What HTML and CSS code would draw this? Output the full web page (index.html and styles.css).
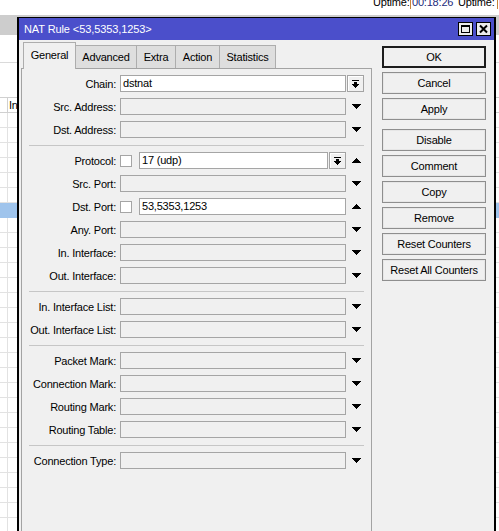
FILE: index.html
```html
<!DOCTYPE html>
<html>
<head>
<meta charset="utf-8">
<link rel="stylesheet" href="styles.css">
</head>
<body>
<svg class="defs" width="0" height="0">
  <symbol id="dn" viewBox="0 0 9 5"><rect x="0" y="0" width="9" height="1"/><rect x="1" y="1" width="7" height="1"/><rect x="2" y="2" width="5" height="1"/><rect x="3" y="3" width="3" height="1"/><rect x="4" y="4" width="1" height="1"/></symbol>
  <symbol id="up" viewBox="0 0 9 5"><rect x="0" y="4" width="9" height="1"/><rect x="1" y="3" width="7" height="1"/><rect x="2" y="2" width="5" height="1"/><rect x="3" y="1" width="3" height="1"/><rect x="4" y="0" width="1" height="1"/></symbol>
  <symbol id="dd" viewBox="0 0 7 8"><rect x="0" y="0" width="7" height="1"/><rect x="2" y="2" width="3" height="2"/><rect x="0" y="4" width="7" height="1"/><rect x="1" y="5" width="5" height="1"/><rect x="2" y="6" width="3" height="1"/><rect x="3" y="7" width="1" height="1"/></symbol>
</svg>

<div class="desk">
  <div class="status">
    <span class="st-lbl">Uptime:</span>
    <span class="st-val">00:18:26</span>
    <span class="st-lbl st-lbl2">Uptime:</span>
    <span class="st-val st-val2"></span>
  </div>
  <div class="toolbar"></div>
  <div class="list">
    <div class="lp1"></div>
    <div class="lp2"></div>
    <div class="lhead"><span class="hc1"></span><span class="hc2">In</span></div>
    <div class="row"></div><div class="row"></div><div class="row"></div><div class="row"></div>
    <div class="row"></div><div class="row"></div><div class="row sel"></div><div class="row"></div>
    <div class="row"></div><div class="row"></div><div class="row"></div><div class="row"></div>
    <div class="row"></div><div class="row"></div><div class="row"></div><div class="row"></div>
    <div class="row"></div><div class="row"></div><div class="row"></div><div class="row"></div>
    <div class="row"></div><div class="row"></div><div class="row"></div><div class="row"></div>
    <div class="row"></div><div class="row"></div><div class="row"></div><div class="row"></div>
  </div>
</div>

<div class="win">
  <div class="titlebar">
    <span class="title">NAT Rule &lt;53,5353,1253&gt;</span>
    <span class="tb-btns">
      <span class="tb-btn"><svg width="11" height="10" viewBox="0 0 11 10"><rect x="1.5" y="1.5" width="8" height="7" fill="none" stroke="#000" stroke-width="1"/><rect x="1" y="1" width="9" height="2" fill="#000"/></svg></span>
      <span class="tb-btn"><svg width="11" height="10" viewBox="0 0 11 10"><path d="M2 1.5 L9 8.5 M9 1.5 L2 8.5" stroke="#000" stroke-width="2"/></svg></span>
    </span>
  </div>
  <div class="wbody">
    <div class="leftcol">
      <div class="tabs">
        <div class="tab active t1">General</div>
        <div class="tab t2">Advanced</div>
        <div class="tab t3">Extra</div>
        <div class="tab t4">Action</div>
        <div class="tab t5">Statistics</div>
      </div>
      <div class="panel">
        <div class="form">
          <div class="frow"><span class="lbl">Chain:</span><span class="fld on">dstnat</span><span class="dbox"><svg class="ddi"><use href="#dd"/></svg></span></div>
          <div class="frow"><span class="lbl">Src. Address:</span><span class="fld"></span><span class="trail"><svg class="arr"><use href="#dn"/></svg></span></div>
          <div class="frow"><span class="lbl">Dst. Address:</span><span class="fld"></span><span class="trail"><svg class="arr"><use href="#dn"/></svg></span></div>
          <div class="sep"></div>
          <div class="frow"><span class="lbl">Protocol:</span><span class="chk"></span><span class="fld on w189">17 (udp)</span><span class="dbox"><svg class="ddi"><use href="#dd"/></svg></span><span class="trail"><svg class="arr"><use href="#up"/></svg></span></div>
          <div class="frow"><span class="lbl">Src. Port:</span><span class="fld"></span><span class="trail"><svg class="arr"><use href="#dn"/></svg></span></div>
          <div class="frow"><span class="lbl">Dst. Port:</span><span class="chk"></span><span class="fld on w207">53,5353,1253</span><span class="trail"><svg class="arr"><use href="#up"/></svg></span></div>
          <div class="frow"><span class="lbl">Any. Port:</span><span class="fld"></span><span class="trail"><svg class="arr"><use href="#dn"/></svg></span></div>
          <div class="frow"><span class="lbl">In. Interface:</span><span class="fld"></span><span class="trail"><svg class="arr"><use href="#dn"/></svg></span></div>
          <div class="frow"><span class="lbl">Out. Interface:</span><span class="fld"></span><span class="trail"><svg class="arr"><use href="#dn"/></svg></span></div>
          <div class="sep"></div>
          <div class="frow"><span class="lbl">In. Interface List:</span><span class="fld"></span><span class="trail"><svg class="arr"><use href="#dn"/></svg></span></div>
          <div class="frow"><span class="lbl">Out. Interface List:</span><span class="fld"></span><span class="trail"><svg class="arr"><use href="#dn"/></svg></span></div>
          <div class="sep"></div>
          <div class="frow"><span class="lbl">Packet Mark:</span><span class="fld"></span><span class="trail"><svg class="arr"><use href="#dn"/></svg></span></div>
          <div class="frow"><span class="lbl">Connection Mark:</span><span class="fld"></span><span class="trail"><svg class="arr"><use href="#dn"/></svg></span></div>
          <div class="frow"><span class="lbl">Routing Mark:</span><span class="fld"></span><span class="trail"><svg class="arr"><use href="#dn"/></svg></span></div>
          <div class="frow"><span class="lbl">Routing Table:</span><span class="fld"></span><span class="trail"><svg class="arr"><use href="#dn"/></svg></span></div>
          <div class="sep"></div>
          <div class="frow"><span class="lbl">Connection Type:</span><span class="fld"></span><span class="trail"><svg class="arr"><use href="#dn"/></svg></span></div>
        </div>
      </div>
    </div>
    <div class="btns">
      <div class="btn def">OK</div>
      <div class="btn">Cancel</div>
      <div class="btn">Apply</div>
      <div class="btn gap">Disable</div>
      <div class="btn">Comment</div>
      <div class="btn">Copy</div>
      <div class="btn">Remove</div>
      <div class="btn">Reset Counters</div>
      <div class="btn">Reset All Counters</div>
    </div>
  </div>
</div>
</body>
</html>
```

FILE: styles.css
```css
* { box-sizing: border-box; }
html, body { margin: 0; padding: 0; }
body {
  width: 499px;
  height: 531px;
  overflow: hidden;
  position: relative;
  background: #fff;
  font-family: "Liberation Sans", Arial, sans-serif;
  font-size: 11px;
  letter-spacing: -0.2px;
  color: #000;
}
.defs { position: absolute; width: 0; height: 0; }

/* background desktop / list */
.desk { width: 499px; height: 531px; }
.status {
  height: 15px;
  display: flex;
  align-items: flex-start;
  padding-left: 373px;
  white-space: nowrap;
}
.st-lbl { display: block; width: 37px; height: 9px; line-height: 5px; flex: none; }
.st-lbl2 { width: 36px; margin-left: 3px; }
.st-val {
  display: block;
  width: 45px;
  height: 9px;
  margin-left: 0;
  padding-left: 1px;
  border-left: 1px solid #c8843a;
  line-height: 5px;
  color: #1c2a7a;
  flex: none;
}
.st-val2 { width: 4px; margin-left: 3px; }
.toolbar { height: 20px; background: #cdcdcd; }
.lp1 { height: 28px; border-bottom: 1px solid #dadada; }
.lp2 { height: 34px; }
.lhead {
  height: 16px;
  display: flex;
  border-top: 1px solid #d0d0d0;
  border-bottom: 1px solid #d0d0d0;
}
.hc1 { width: 8px; border-right: 1px solid #d0d0d0; }
.hc2 { padding-left: 1px; line-height: 14px; }
.row {
  height: 15px;
  border-bottom: 1px solid #e2e2e2;
  background: linear-gradient(to right, transparent 7px, #e2e2e2 7px, #e2e2e2 8px, transparent 8px);
}
.row.sel { background: #9fc4ec; border-bottom-color: #9fc4ec; }

/* window */
.win {
  position: absolute;
  left: 17px;
  top: 17px;
  width: 479px;
  height: 520px;
  border: 2px solid #000;
  border-top-width: 1px;
  border-bottom: 0;
  background: #f0f0f0;
  display: flex;
  flex-direction: column;
}
.titlebar {
  height: 22px;
  flex: none;
  background: #4b4fcb;
  color: #fff;
  display: flex;
  align-items: center;
  padding: 0 3px 0 5px;
  letter-spacing: -0.1px;
}
.title { flex: 1; white-space: nowrap; }
.tb-btns { display: flex; gap: 3px; }
.tb-btn {
  width: 15px;
  height: 14px;
  border: 1px solid #000;
  background: #ececec;
  display: flex;
  align-items: center;
  justify-content: center;
}
.wbody { flex: 1; display: flex; padding: 2px 0 0 2px; }
.leftcol { width: 351px; display: flex; flex-direction: column; flex: none; }
.tabs { height: 26px; display: flex; align-items: flex-end; padding-left: 2px; flex: none; }
.tab {
  height: 23px;
  border: 1px solid #adadad;
  border-bottom: 0;
  background: #dedede;
  display: flex;
  align-items: center;
  justify-content: center;
  margin-left: -1px;
  white-space: nowrap;
  flex: none;
}
.tab.active {
  height: 27px;
  margin-bottom: -1px;
  margin-left: 0;
  padding-bottom: 3px;
  background: #f0f0f0;
  position: relative;
  z-index: 1;
}
.t1 { width: 53px; }
.t2 { width: 62px; }
.t3 { width: 40px; }
.t4 { width: 45px; }
.t5 { width: 57px; }
.panel {
  flex: 1;
  border: 1px solid #a3a3a3;
  border-bottom: 0;
  padding: 6px 6px 0 7px;
  background: #f0f0f0;
}
.form { display: flex; flex-direction: column; gap: 6px; }
.frow { display: flex; align-items: center; height: 17px; }
.lbl {
  width: 87px;
  margin-right: 4px;
  display: flex;
  justify-content: flex-end;
  white-space: nowrap;
  flex: none;
}
.fld {
  width: 226px;
  height: 17px;
  border: 1px solid #a5a5a5;
  background: #f0f0f0;
  padding-left: 2px;
  line-height: 15px;
  white-space: nowrap;
  flex: none;
}
.fld.on { background: #fff; }
.fld.w189 { width: 189px; }
.fld.w207 { width: 207px; }
.chk {
  width: 12px;
  height: 12px;
  border: 1px solid #a5a5a5;
  background: #fff;
  margin-right: 7px;
  flex: none;
}
.dbox {
  width: 17px;
  height: 17px;
  margin-left: 1px;
  border: 1px solid #a3a3a3;
  background: #f0f0f0;
  box-shadow: inset 1px 1px 0 #fff;
  display: flex;
  align-items: center;
  justify-content: center;
  flex: none;
}
.ddi { width: 7px; height: 8px; fill: #000; }
.trail {
  width: 18px;
  height: 17px;
  margin-left: 1px;
  display: flex;
  align-items: center;
  justify-content: center;
  flex: none;
}
.arr { width: 9px; height: 5px; fill: #000; }
.sep { height: 2px; border-bottom: 1px solid #c6c6c6; margin-right: 1px; }

.btns {
  width: 104px;
  margin-left: 10px;
  margin-top: 4px;
  display: flex;
  flex-direction: column;
  gap: 4px;
  flex: none;
}
.btn {
  height: 22px;
  border: 1px solid #8e8e8e;
  background: #f0f0f0;
  box-shadow: inset 0 0 0 1px #e6e6e6;
  display: flex;
  align-items: center;
  justify-content: center;
  white-space: nowrap;
}
.btn.def { border: 2px solid #1c1c1c; box-shadow: none; }
.btn.gap { margin-top: 5px; }
```
